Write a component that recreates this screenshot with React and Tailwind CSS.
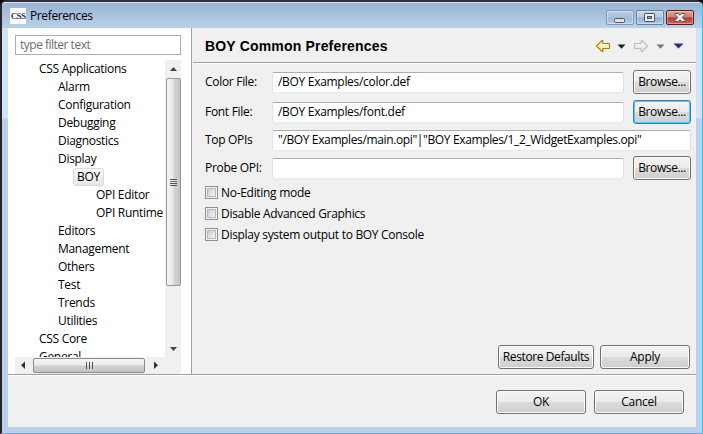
const tree = [
  ['CSS Applications', 'pl-[24px]'],
  ['Alarm', 'pl-[43px]'],
  ['Configuration', 'pl-[43px]'],
  ['Debugging', 'pl-[43px]'],
  ['Diagnostics', 'pl-[43px]'],
  ['Display', 'pl-[43px]'],
  ['BOY', 'pl-[58px]', true],
  ['OPI Editor', 'pl-[81px]'],
  ['OPI Runtime', 'pl-[81px]'],
  ['Editors', 'pl-[43px]'],
  ['Management', 'pl-[43px]'],
  ['Others', 'pl-[43px]'],
  ['Test', 'pl-[43px]'],
  ['Trends', 'pl-[43px]'],
  ['Utilities', 'pl-[43px]'],
  ['CSS Core', 'pl-[24px]'],
  ['General', 'pl-[24px]'],
];

function Button({ children, className = 'w-[58px]', focused = false }) {
  const edge = focused
    ? 'border-[#3c7fb1] shadow-[inset_0_0_0_1px_#45d0f5]'
    : 'border-[#707070] shadow-[inset_0_0_0_1px_#fcfcfc]';
  return (
    <button className={`flex h-[24px] shrink-0 items-center justify-center whitespace-nowrap rounded-[3px] border bg-[linear-gradient(#f3f3f3_0%,#ebebeb_48%,#dcdcdc_52%,#cdcdcd_100%)] pb-px ${edge} ${className}`}>
      {children}
    </button>
  );
}

function Field({ value = '', className = 'w-[352px]' }) {
  return (
    <div className={`flex h-[21px] shrink-0 items-center whitespace-pre rounded-[2px] border border-t-[#abadb3] border-r-[#dbdfe6] border-b-[#e3e9ef] border-l-[#e2e3ea] bg-white pl-[5px] pb-px ${className}`}>
      {value}
    </div>
  );
}

function Row({ label, value, wide, focused, className = '' }) {
  return (
    <div className={`flex h-[24px] items-center ${className}`}>
      <span className="w-[67px] shrink-0 whitespace-nowrap pb-px">{label}</span>
      <Field value={value} className={wide ? 'w-[419px] tracking-[-0.37px]' : 'w-[352px]'} />
      {!wide && <Button focused={focused} className="ml-[9px] w-[58px] tracking-[-0.38px]">Browse...</Button>}
    </div>
  );
}

function Check({ label }) {
  return (
    <label className="flex h-[21px] items-center whitespace-nowrap">
      <span className="mr-[3px] flex size-[13px] items-center justify-center border border-[#8e8f8f] bg-[#f4f4f4]">
        <span className="size-[9px] border border-[#b4b9bf] bg-[linear-gradient(135deg,#c9ced4,#f6f6f6)]" />
      </span>
      {label}
    </label>
  );
}

function Caret({ className }) {
  return (
    <svg className={className} width="9" height="5" viewBox="0 0 9 5" fill="currentColor">
      <path d="M0.5 0.5H8.5L4.5 4.8Z" />
    </svg>
  );
}

function Arrow({ flip, stroke, fill }) {
  return (
    <svg className={flip ? '-scale-x-100' : ''} width="16" height="14" viewBox="0 0 16 14">
      <path d="M1.5 7L7 1.5H7.8V4.5H14.5V9.5H7.8V12.5H7Z" fill={fill} stroke={stroke} strokeWidth="1.15" strokeLinejoin="round" />
      <path d="M3.5 7L6.6 4V5.7H13.3" fill="none" stroke="#fffdf0" strokeWidth="1" />
    </svg>
  );
}

function WindowButton({ kind }) {
  const close = kind === 'close';
  const look = close
    ? 'w-[28px] border-[#581d2a] bg-[linear-gradient(#e6a297_0%,#d07a6c_48%,#b5382a_52%,#d0695a_100%)]'
    : kind === 'min'
      ? 'w-[28px] border-[#8298b4] bg-[linear-gradient(#b9cfe6_0%,#a9c2de_48%,#9fbad7_52%,#b4cde7_100%)]'
      : 'w-[28px] border-[#667f9f] bg-[linear-gradient(#c2d5e9_0%,#b3c9e1_48%,#92afcf_52%,#b1cae5_100%)]';
  return (
    <div className={`flex h-[15px] items-center justify-center rounded-[2px] border shadow-[inset_0_0_0_1px_rgba(255,255,255,0.35)] ${look}`}>
      <svg width="14" height="12" viewBox="0 0 14 12">
        {kind === 'min' && <rect x="1.5" y="6.5" width="10" height="4" rx="1" fill="#e0e0dc" stroke="#4e5868" />}
        {kind === 'max' && (
          <g stroke="#454e63" fill="#f0f0f0">
            <rect x="1.5" y="1.5" width="10" height="8" rx="0.7" />
            <rect x="4.5" y="4.5" width="4" height="2" fill="#8faccb" />
          </g>
        )}
        {close && (
          <path d="M2 1.5H5.2L7 3.3L8.8 1.5H12V2.5L9.2 5.5L12 8.5V9.5H8.8L7 7.7L5.2 9.5H2V8.5L4.8 5.5L2 2.5Z" fill="#f5f5f5" stroke="#565262" />
        )}
      </svg>
    </div>
  );
}

export default function App() {
  return (
    <div className="flex h-[434px] w-[703px] flex-col overflow-hidden bg-black font-['Open_Sans','Noto_Sans',sans-serif] text-[12px] leading-[16px] tracking-[-0.3px] text-black">
      <div className="flex h-full flex-col rounded-t-[6px] border-t-2 border-r border-b border-l-2 border-t-[#302e38] border-r-[#25c9e4] border-b-[#25c9e4] border-l-[#25262b] bg-[linear-gradient(#d2e3f4_0px,#d2e3f4_116px,#b9d1ea_117px)]">
        <header className="flex h-[26px] shrink-0 items-center rounded-t-[4px] border-t border-[#d5e4f3] bg-[linear-gradient(#98b4d2,#b9d1ea)] pl-[8px] pr-[8px]">
          <span className="flex h-[16px] w-[16px] items-center justify-center overflow-hidden bg-white font-['Liberation_Serif',serif] text-[9px] font-bold tracking-[-0.6px] text-[#35356a]">CSS</span>
          <span className="ml-[4px] flex-1 pt-px tracking-[-0.38px]">Preferences</span>
          <div className="flex gap-[2px] pt-[4px]">
            <WindowButton kind="min" />
            <WindowButton kind="max" />
            <WindowButton kind="close" />
          </div>
        </header>
        <div className="ml-[6px] flex h-[399px] w-[688px] shrink-0 flex-col bg-[#f0f0f0]">
          <main className="flex h-[347px] border-b border-[#a0a0a0]">
            <aside className="flex w-[184px] shrink-0 flex-col border-r border-[#a0a0a0] bg-white pl-[7px] pt-[7px]">
              <div className="flex h-[20px] w-[166px] shrink-0 items-center border border-[#abadb3] pl-[4px] pb-px tracking-[-0.5px] text-[#6d6d6d]">type filter text</div>
              <div className="mt-[5px] flex h-[297px] w-[166px]">
                <ul className="h-[297px] w-[150px] overflow-hidden">
                  {tree.map(([name, indent, selected]) => (
                    <li key={name} className={`flex h-[18px] items-center whitespace-nowrap ${indent}`}>
                      {selected
                        ? <span className="flex h-[18px] w-[31px] items-center justify-center rounded-[3px] border border-[#d9d9d9] bg-[linear-gradient(#f9f9f9,#e6e6e6)]">{name}</span>
                        : name}
                    </li>
                  ))}
                </ul>
                <div className="flex w-[16px] flex-col items-center bg-[#f0f0f0]">
                  <svg className="shrink-0" width="16" height="18"><path d="M5 11L8.5 7L12 11Z" fill="#444" /></svg>
                  <div className="flex h-[208px] w-[15px] shrink-0 flex-col items-center justify-center gap-px rounded-[2px] border border-[#979797] bg-[linear-gradient(90deg,#f5f5f5_0%,#e9e9eb_48%,#d3d4d7_52%,#c3c4c9_100%)]">
                    <i className="h-px w-[7px] bg-[#555]" /><i className="h-px w-[7px] bg-[#777]" />
                    <i className="h-px w-[7px] bg-[#555]" /><i className="h-px w-[7px] bg-[#555]" />
                  </div>
                  <svg className="mt-auto shrink-0" width="16" height="18"><path d="M5 8L8.5 12L12 8Z" fill="#444" /></svg>
                </div>
              </div>
              <div className="flex h-[17px] w-[166px] items-center bg-[#f0f0f0]">
                <svg width="18" height="17"><path d="M10 4.5V12L6 8.2Z" fill="#333" /></svg>
                <div className="flex h-[15px] w-[112px] items-center justify-center gap-[2px] rounded-[2px] border border-[#8b8b8b] bg-[linear-gradient(#f5f5f5_0%,#e9e9eb_48%,#d0d1d4_52%,#c3c4c9_100%)]">
                  <i className="h-[7px] w-px bg-[#555]" />
                  <i className="h-[7px] w-px bg-[#555]" />
                  <i className="h-[7px] w-px bg-[#555]" />
                </div>
                <svg width="20" height="17"><path d="M9 4.5V12L13 8.2Z" fill="#333" /></svg>
              </div>
            </aside>
            <section className="ml-px flex flex-1 flex-col">
              <div className="flex h-[35px] shrink-0 items-center border-b border-[#a0a0a0] pl-[12px] pr-[12px] pt-[2px]">
                <h1 className="flex-1 whitespace-nowrap font-['Liberation_Sans',Arial,sans-serif] text-[14px] font-bold tracking-[0.18px]">BOY Common Preferences</h1>
                <Arrow stroke="#b87d0e" fill="#fdeeb0" />
                <Caret className="ml-[6px] text-[#202020]" />
                <span className="ml-[7px] flex"><Arrow flip stroke="#bcbcb8" fill="#ecece6" /></span>
                <Caret className="ml-[7px] text-[#777]" />
                <svg className="ml-[8px]" width="11" height="6" viewBox="0 0 11 6"><path d="M0.5 0.5H10.5L5.5 5.5Z" fill="#32297a" /></svg>
              </div>
              <div className="flex flex-1 flex-col border-t border-white pl-[12px] pt-[6px]">
                <Row label="Color File:" value="/BOY Examples/color.def" />
                <Row label="Font File:" value="/BOY Examples/font.def" focused className="mt-[6px]" />
                <Row label="Top OPIs" value={'"/BOY Examples/main.opi"|"BOY Examples/1_2_WidgetExamples.opi"'} wide className="mt-[4px]" />
                <Row label="Probe OPI:" className="mt-[4px]" />
                <div className="mt-[2px]">
                  <Check label="No-Editing mode" />
                  <Check label="Disable Advanced Graphics" />
                  <Check label="Display system output to BOY Console" />
                </div>
                <div className="mb-[5px] mr-[6px] mt-auto flex justify-end gap-[6px]">
                  <Button className="w-[96px] tracking-[-0.4px]">Restore Defaults</Button>
                  <Button className="w-[90px]">Apply</Button>
                </div>
              </div>
            </section>
          </main>
          <footer className="flex flex-1 justify-end gap-[8px] border-t border-white pr-[12px] pt-[14px]">
            <Button className="w-[90px]">OK</Button>
            <Button className="w-[90px]">Cancel</Button>
          </footer>
        </div>
      </div>
    </div>
  );
}
